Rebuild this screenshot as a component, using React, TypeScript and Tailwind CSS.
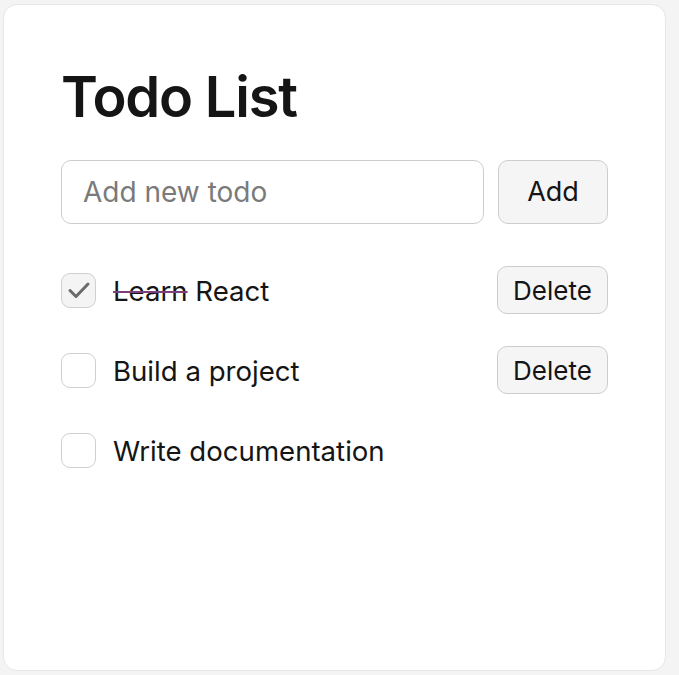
import { useState } from "react";

type Todo = { id: number; text: string; done: boolean; deletable: boolean };

const initial: Todo[] = [
  { id: 1, text: "Learn React", done: true, deletable: true },
  { id: 2, text: "Build a project", done: false, deletable: true },
  { id: 3, text: "Write documentation", done: false, deletable: false },
];

function Check({ on, onClick }: { on: boolean; onClick: () => void }) {
  return (
    <button
      onClick={onClick}
      className={`flex h-[35px] w-[35px] shrink-0 items-center justify-center rounded-[9px] border-[1.5px] border-[#cfcfcf] ${on ? "bg-[#f4f4f4]" : "bg-white"}`}
    >
      {on && (
        <svg width="24" height="24" viewBox="0 0 24 24" fill="none" className="shrink-0">
          <path d="M3 12.5l6 6L21 6" stroke="#6b6b6b" strokeWidth="3" strokeLinecap="round" strokeLinejoin="round" />
        </svg>
      )}
    </button>
  );
}

export default function App() {
  const [todos, setTodos] = useState<Todo[]>(initial);
  const [text, setText] = useState("");

  function add() {
    if (!text.trim()) return;
    setTodos([...todos, { id: Date.now(), text, done: false, deletable: true }]);
    setText("");
  }

  return (
    <div className="min-h-[675px] bg-[#f4f4f4] pt-1 pl-[3px] font-['Inter',sans-serif] text-[#151515]">
      <div className="h-[667px] w-[663px] rounded-[14px] border border-[#e6e6e6] bg-white px-[57px] pt-[59px]">
        <h1 className="text-[56px] font-semibold leading-[67px] tracking-[-1.2px]">Todo List</h1>
        <div className="mt-[29px] flex gap-[14px]">
          <input
            value={text}
            onChange={(e) => setText(e.target.value)}
            placeholder="Add new todo"
            className="h-16 w-[423px] rounded-[10px] border border-[#cdcdcd] px-[21px] text-[28px] outline-none placeholder:text-[#7a7a7a]"
          />
          <button onClick={add} className="h-16 w-[111px] rounded-[10px] border border-[#cdcdcd] bg-[#f5f5f5] text-[27px]">
            Add
          </button>
        </div>
        <ul className="mt-[42px] flex flex-col gap-8">
          {todos.map((t) => {
            const [first, ...rest] = t.text.split(" ");
            return (
              <li key={t.id} className="flex h-12 items-center">
                <Check on={t.done} onClick={() => setTodos(todos.map((x) => (x.id === t.id ? { ...x, done: !x.done } : x)))} />
                <span className="ml-[17px] mt-[3px] flex-1 text-[27.6px]">
                  {t.done ? (
                    <>
                      <span className="line-through decoration-[#7b3f7b] decoration-[1.5px]">{first}</span> {rest.join(" ")}
                    </>
                  ) : (
                    t.text
                  )}
                </span>
                {t.deletable && (
                  <button
                    onClick={() => setTodos(todos.filter((x) => x.id !== t.id))}
                    className="h-12 w-[111px] rounded-[10px] border border-[#cdcdcd] bg-[#f5f5f5] text-[26px]"
                  >
                    Delete
                  </button>
                )}
              </li>
            );
          })}
        </ul>
      </div>
    </div>
  );
}
